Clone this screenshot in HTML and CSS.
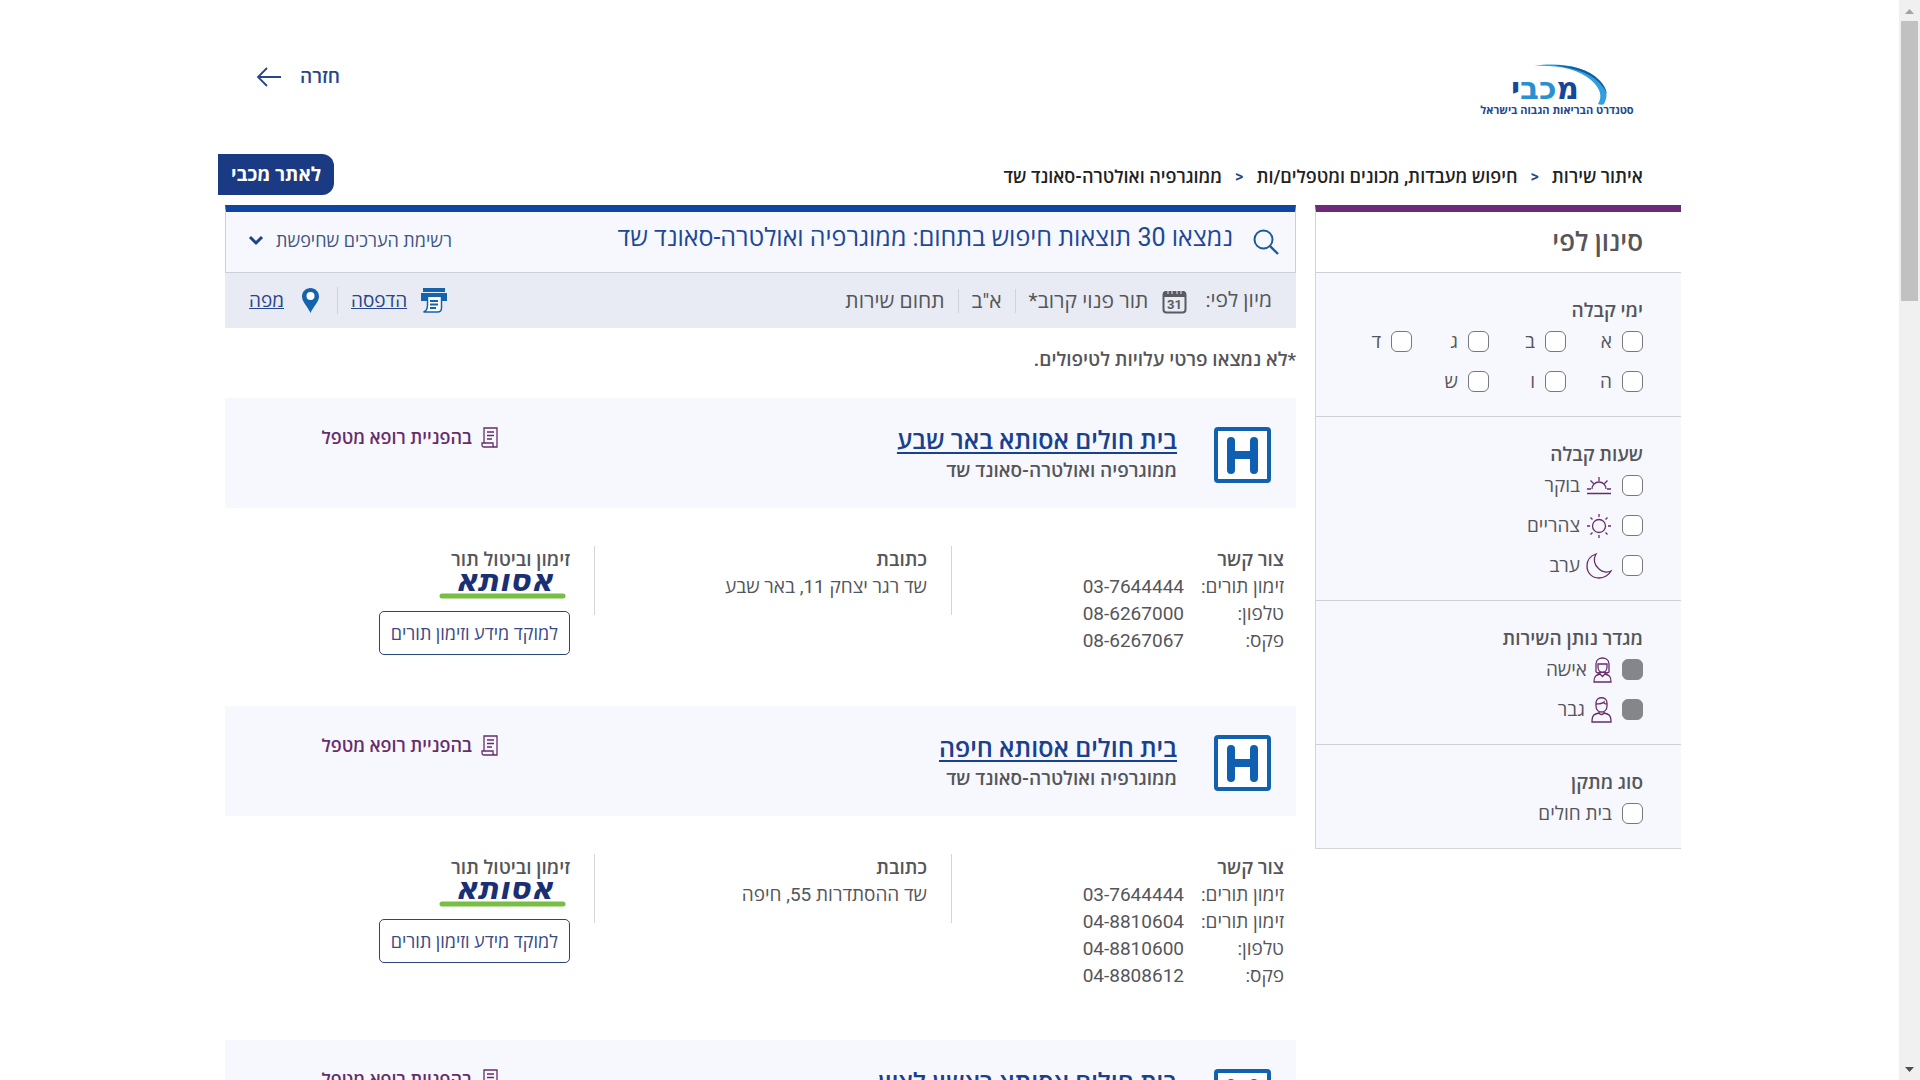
FILE: index.html
```html
<!DOCTYPE html>
<html lang="he" dir="rtl">
<head>
<meta charset="utf-8">
<title>איתור שירות - מכבי</title>
<link rel="stylesheet" href="styles.css">
</head>
<body>
<svg class="sprite" aria-hidden="true">
  <symbol id="hospital" viewBox="0 0 57 56">
    <rect x="2" y="2" width="53" height="52" rx="2" fill="#fff" stroke="#1361ae" stroke-width="4"/>
    <path d="M17 14v29M40 14v29M17 28h23" fill="none" stroke="#0f60b0" stroke-width="8" stroke-linecap="round"/>
  </symbol>
  <symbol id="referral" viewBox="0 0 17 21">
    <path d="M3 16V1h13v19H3c-1.500 0-2-1-2-2v-2h11v2c0 1 .5 2 2 2M6 5h7M6 8.500h7M6 12h5" fill="none" stroke="#662d6b" stroke-width="1.3"/>
  </symbol>
  <symbol id="assuta" viewBox="0 0 132 27" overflow="visible">
    <text x="66" y="18" direction="rtl" text-anchor="middle" class="assuta-word">אסותא</text>
    <path d="M4 23h121" stroke="#78be43" stroke-width="5" stroke-linecap="round"/>
  </symbol>
</svg>
<div class="shell">
  <div class="viewport">
    <div class="container">
      <header class="site-header">
        <a class="logo" href="#" aria-label="מכבי">
          <svg width="150" height="54" viewBox="0 0 150 54">
            <path d="M52 3C76-1 104 3 117 17c9 9 9 16 5 24-1 1-4 1-6 0 5-8 2-16-7-24C96 6 75 2 52 3z" fill="#2f9fdd"/>
            <path d="M70 2c20 0 38 5 47 15 5 5 7 9 8 14-7-16-23-25-55-29z" fill="#1459a5"/>
            <text x="63" y="36" direction="rtl" text-anchor="middle" class="logo-word"><tspan fill="#17479b">מ</tspan><tspan fill="#2a8fd2">כב</tspan><tspan fill="#17479b">י</tspan></text>
            <text x="75" y="51" direction="rtl" text-anchor="middle" class="logo-tag">סטנדרט הבריאות הגבוה בישראל</text>
          </svg>
        </a>
        <a class="back" href="#">חזרה
          <svg width="26" height="20" viewBox="0 0 26 20"><path d="M25 10H2M11 1 2 10l9 9" fill="none" stroke="#27468c" stroke-width="1.8"/></svg>
        </a>
      </header>
      <div class="topline">
        <nav class="crumbs" aria-label="ניווט">
          <a href="#">איתור שירות</a><span class="sep">&gt;</span><a href="#">חיפוש מעבדות, מכונים ומטפלים/ות</a><span class="sep">&gt;</span><span>ממוגרפיה ואולטרה-סאונד שד</span>
        </nav>
        <a class="to-site" href="#">לאתר מכבי</a>
      </div>
      <div class="columns">
        <aside class="filters">
          <h2>סינון לפי</h2>
          <section>
            <h3>ימי קבלה</h3>
            <div class="days">
              <label><input type="checkbox">א</label>
              <label><input type="checkbox">ב</label>
              <label><input type="checkbox">ג</label>
              <label><input type="checkbox">ד</label>
              <label><input type="checkbox">ה</label>
              <label><input type="checkbox">ו</label>
              <label><input type="checkbox">ש</label>
            </div>
          </section>
          <section>
            <h3>שעות קבלה</h3>
            <div class="options">
              <label><input type="checkbox"><svg width="26" height="26" viewBox="0 0 26 26"><path d="M1 20.500h24M1 16h4M21 16h4M6 16a7 7 0 0 1 14 0M13 4v4M4.500 7.500l3 3M21.500 7.500l-3 3"/></svg>בוקר</label>
              <label><input type="checkbox"><svg width="26" height="26" viewBox="0 0 26 26"><circle cx="13" cy="13" r="6.500"/><path d="M13 1v3M13 22v3M1 13h3M22 13h3M4.500 4.500l2 2M19.500 19.500l2 2M4.500 21.500l2-2M19.500 6.500l2-2"/></svg>צהריים</label>
              <label><input type="checkbox"><svg width="26" height="26" viewBox="0 0 26 26"><path d="M10 1C4 3 1 8 1 13c0 7 5 12 12 12 5 0 10-3 12-7-4 2-9 1-12-2C8 12 7 6 10 1z"/></svg>ערב</label>
            </div>
          </section>
          <section>
            <h3>מגדר נותן השירות</h3>
            <div class="options">
              <label><input type="checkbox" disabled><svg width="19" height="26" viewBox="0 0 19 26"><path d="M3 15V7c0-8 13-8 13 0v8c-1 1-3 1-4 1M3 15c1 1 3 1 4 1M5 7h9v3c0 7-9 7-9 0zM7 15v2l2.500 2.500L12 17v-2M7 17c-4 1-6 2-6 8h17c0-6-2-7-6-8"/></svg>אישה</label>
              <label><input type="checkbox" disabled><svg width="21" height="26" viewBox="0 0 21 26"><path d="M5 9V6c0-7 11-7 11 0v3M5 7c4 0 7-1 8-2 0 2 1 2 3 2M5 9c0 8 11 8 11 0M8 14v2c1 2 4 2 5 0v-2M8 16c-5 1-7 2-7 9h19c0-7-2-8-7-9"/></svg>גבר</label>
            </div>
          </section>
          <section>
            <h3>סוג מתקן</h3>
            <div class="options">
              <label><input type="checkbox">בית חולים</label>
            </div>
          </section>
        </aside>
        <main class="results">
          <div class="summary">
            <svg width="26" height="26" viewBox="0 0 26 26"><circle cx="10.500" cy="10.500" r="9" fill="none" stroke="#1b5b9c" stroke-width="2"/><path d="M17 17l8 8" stroke="#1b5b9c" stroke-width="2.400"/></svg>
            <h1>נמצאו 30 תוצאות חיפוש בתחום: ממוגרפיה ואולטרה-סאונד שד</h1>
            <button class="terms" type="button">רשימת הערכים שחיפשת
              <svg width="16" height="11" viewBox="0 0 16 11"><path d="M2 2l6 6 6-6" fill="none" stroke="#1d4388" stroke-width="3"/></svg>
            </button>
          </div>
          <div class="toolbar">
            <span class="sort-label">מיון לפי:</span>
            <button type="button" class="sort first">
              <svg width="25" height="26" viewBox="0 0 25 26"><rect x="1.500" y="4" width="22" height="20.500" rx="3" fill="none" stroke="#5a5b60" stroke-width="2"/><path d="M1 9V5l2-2h19l2 2v4z" fill="#5a5b60"/><path d="M6 0v6M10 0v6M15 0v6M19 0v6" stroke="#e8ebf3" stroke-width="1"/><text x="12.500" y="21" text-anchor="middle" class="cal-day">31</text></svg>
              תור פנוי קרוב*</button>
            <button type="button" class="sort">א"ב</button>
            <button type="button" class="sort">תחום שירות</button>
            <div class="tools">
              <a href="#"><svg width="26" height="25" viewBox="0 0 26 25"><path d="M2 0h22v4H2z" fill="#1463ad"/><path d="M0 5h26v8h-5V9H6v4H0z" fill="#1463ad"/><path d="M6.500 9v8c0 4-1 6-4 7h14c3 0 4-1 4-4V9" fill="#fff" stroke="#1463ad" stroke-width="1.500"/><path d="M9 13h8M9 16.500h8M9 20h6" stroke="#1463ad" stroke-width="1.800"/></svg><span>הדפסה</span></a>
              <a href="#"><svg width="17" height="25" viewBox="0 0 17 25"><path d="M8.500 0C4 0 0 3.500 0 8.500 0 14 6 19 8.500 25 11 19 17 14 17 8.500 17 3.500 13 0 8.500 0z" fill="#1463ad"/><circle cx="8.500" cy="8" r="4" fill="#fff"/></svg><span>מפה</span></a>
            </div>
          </div>
          <p class="note">*לא נמצאו פרטי עלויות לטיפולים.</p>

          <article>
            <div class="card-head">
              <svg class="kind" width="57" height="56"><use href="#hospital"/></svg>
              <div class="names">
                <h2><a href="#">בית חולים אסותא באר שבע</a></h2>
                <p>ממוגרפיה ואולטרה-סאונד שד</p>
              </div>
              <span class="referral"><svg width="17" height="21"><use href="#referral"/></svg>בהפניית רופא מטפל</span>
            </div>
            <div class="card-body">
              <section>
                <h3>צור קשר</h3>
                <dl>
                  <dt>זימון תורים:</dt><dd>03-7644444</dd>
                  <dt>טלפון:</dt><dd>08-6267000</dd>
                  <dt>פקס:</dt><dd>08-6267067</dd>
                </dl>
              </section>
              <section>
                <h3>כתובת</h3>
                <p>שד רגר יצחק 11, באר שבע</p>
              </section>
              <section>
                <h3>זימון וביטול תור</h3>
                <svg class="assuta" width="132" height="27"><use href="#assuta"/></svg>
                <button type="button" class="book">למוקד מידע וזימון תורים</button>
              </section>
            </div>
          </article>

          <article>
            <div class="card-head">
              <svg class="kind" width="57" height="56"><use href="#hospital"/></svg>
              <div class="names">
                <h2><a href="#">בית חולים אסותא חיפה</a></h2>
                <p>ממוגרפיה ואולטרה-סאונד שד</p>
              </div>
              <span class="referral"><svg width="17" height="21"><use href="#referral"/></svg>בהפניית רופא מטפל</span>
            </div>
            <div class="card-body">
              <section>
                <h3>צור קשר</h3>
                <dl>
                  <dt>זימון תורים:</dt><dd>03-7644444</dd>
                  <dt>זימון תורים:</dt><dd>04-8810604</dd>
                  <dt>טלפון:</dt><dd>04-8810600</dd>
                  <dt>פקס:</dt><dd>04-8808612</dd>
                </dl>
              </section>
              <section>
                <h3>כתובת</h3>
                <p>שד ההסתדרות 55, חיפה</p>
              </section>
              <section>
                <h3>זימון וביטול תור</h3>
                <svg class="assuta" width="132" height="27"><use href="#assuta"/></svg>
                <button type="button" class="book">למוקד מידע וזימון תורים</button>
              </section>
            </div>
          </article>

          <article>
            <div class="card-head">
              <svg class="kind" width="57" height="56"><use href="#hospital"/></svg>
              <div class="names">
                <h2><a href="#">בית חולים אסותא ראשון לציון</a></h2>
                <p>ממוגרפיה ואולטרה-סאונד שד</p>
              </div>
              <span class="referral"><svg width="17" height="21"><use href="#referral"/></svg>בהפניית רופא מטפל</span>
            </div>
          </article>
        </main>
      </div>
    </div>
  </div>
  <div class="scrollbar" aria-hidden="true">
    <svg width="21" height="21" viewBox="0 0 21 21"><path d="M6 14l4.500-5 4.500 5z" fill="#a3a3a3"/></svg>
    <div class="track"><div class="thumb"></div></div>
    <svg width="21" height="21" viewBox="0 0 21 21"><path d="M6 8l4.500 5L15 8z" fill="#505050"/></svg>
  </div>
</div>
</body>
</html>
```
FILE: styles.css
```css
* { box-sizing: border-box; }
body {
  margin: 0;
  font-family: Roboto, "Open Sans", "Liberation Sans", sans-serif;
  font-size: 19px;
  line-height: 27px;
  color: #55565a;
  background: #fff;
}
h1, h2, h3, p, dl, dd { margin: 0; font-weight: 400; }
a { color: inherit; text-decoration: none; }
button { font: inherit; color: inherit; background: none; border: 0; padding: 0; cursor: pointer; }
svg { flex: none; display: block; overflow: visible; }
.sprite { position: absolute; width: 0; height: 0; }

.shell { display: flex; flex-direction: row-reverse; height: 100vh; }
.viewport { flex: 1; min-width: 0; overflow-y: auto; scrollbar-width: none; }
.container { max-width: 1463px; margin: 0 auto; }

.scrollbar { width: 21px; background: #f0f0f0; display: flex; flex-direction: column; }
.track { flex: 1; padding: 0 2px; }
.thumb { height: 27%; background: #c1c1c1; }

.site-header { display: flex; justify-content: space-between; align-items: flex-start; height: 154px; padding: 63px 49px 0 38px; }
.logo-word { font: 700 31px "DejaVu Sans", sans-serif; }
.logo-tag { font: 700 11px "Open Sans", sans-serif; fill: #21498f; }
.back { display: flex; align-items: center; gap: 18px; font-weight: 600; color: #27468c; }

.topline { display: flex; justify-content: space-between; align-items: center; height: 51px; padding-bottom: 10px; }
.crumbs { display: flex; gap: 13px; padding-right: 38px; padding-top: 4px; color: #222; font-size: 18px; font-weight: 600; }
.sep { color: #27468c; direction: ltr; unicode-bidi: bidi-override; font-size: 16px; }
.to-site { background: #1a3a83; color: #fff; font-weight: 700; line-height: 41px; padding: 0 13px; border-radius: 0 12px 12px 0; }

.columns { display: grid; grid-template-columns: minmax(0, 1fr) 1071px; gap: 19px; align-items: start; padding-left: 7px; }

.filters { border-top: 7px solid #6d2a78; border-left: 1px solid #d4d4da; border-bottom: 1px solid #d4d4da; background: #f7f8fd; }
.filters h2 { height: 60px; padding: 0 38px; line-height: 60px; background: #fff; font-size: 26px; font-weight: 600; }
.filters section { border-top: 1px solid #cfcfd5; padding: 24px 38px; }
.filters h3 { font-size: 19px; font-weight: 600; margin-bottom: 7px; }
.options { display: grid; gap: 19px; justify-items: start; }
.days { display: grid; grid-template-columns: 77px 77px 77px auto; gap: 19px 0; }
.filters label { display: flex; align-items: center; gap: 10px; height: 21px; }
.filters label svg { margin-left: -4px; fill: none; stroke: #662d6b; stroke-width: 1.3; }
.filters input { appearance: none; width: 21px; height: 21px; margin: 0; border: 1px solid #77787c; border-radius: 6px; background: #fff; }
.filters input:disabled { background: #858689; border-color: #858689; }

.summary { display: flex; align-items: center; height: 68px; padding: 0 16px 0 22px; border: 1px solid #cdcfd8; border-top: 7px solid #0f47a0; background: #f7f8fd; color: #27468c; }
.summary h1 { flex: 1; padding: 0 20px 8px 0; font-size: 25px; line-height: 30px; color: #20479a; }
.terms { display: flex; align-items: center; gap: 12px; padding-bottom: 4px; font-size: 18px; color: #415581; }
.toolbar { display: flex; align-items: center; height: 55px; padding: 0 24px; background: #e8ebf3; font-size: 21px; }
.sort { padding: 0 13px; border-right: 1px solid #cfd3dc; line-height: 24px; }
.sort.first { display: flex; align-items: center; gap: 14px; padding-right: 18px; border-right: 0; }
.cal-day { font: 700 13px Roboto, sans-serif; fill: #5a5b60; }
.tools { display: flex; margin-right: auto; color: #27468c; font-size: 19px; }
.tools a { display: flex; align-items: center; gap: 14px; }
.tools a + a { margin-right: 13px; padding-right: 18px; border-right: 1px solid #cfd3dc; gap: 18px; }
.tools span { text-decoration: underline; }
.note { margin: 18px 0 25px; font-weight: 600; }

.card-head { display: flex; align-items: flex-start; height: 110px; padding: 29px 25px 0; background: #f7f8fd; }
.names { flex: 1; padding-right: 37px; }
.names h2 { font-size: 25px; font-weight: 600; color: #1a418f; }
.names h2 a { text-decoration: underline; text-decoration-thickness: 2px; text-underline-offset: 3px; }
.names p { font-weight: 600; padding-top: 3px; }
.referral { display: flex; align-items: center; gap: 9px; width: 248px; color: #662d6b; font-size: 18px; font-weight: 600; line-height: 20px; }
.card-body { display: grid; grid-template-columns: 344px 357px 1fr; padding: 38px 0 51px; }
.card-body section { position: relative; padding-right: 25px; }
.card-body section:first-child { padding-right: 12px; }
.card-body section + section::before { content: ""; position: absolute; top: 0; right: 0; height: 69px; border-right: 1px solid #d4d4da; }
.card-body h3 { font-size: 19px; font-weight: 600; }
.card-body dl { display: grid; grid-template-columns: 88px auto; justify-content: start; column-gap: 12px; }
.assuta { margin-bottom: 11px; }
.assuta-word { font: italic 700 31px "DejaVu Sans", sans-serif; fill: #1b2f75; }
.book { height: 44px; padding: 0 11px; border: 1px solid #27467c; border-radius: 5px; font-size: 18px; color: #3a4a86; background: #fff; }
```
